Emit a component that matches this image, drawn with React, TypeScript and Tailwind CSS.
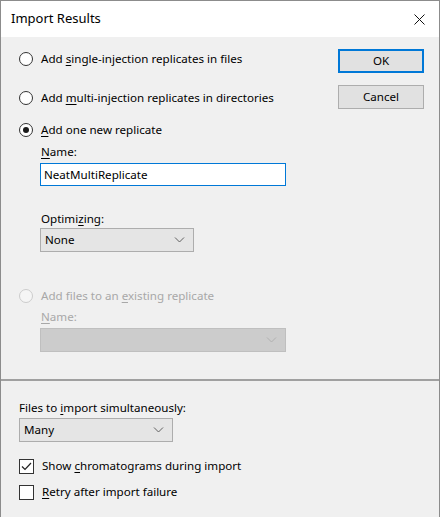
import * as React from "react";

const font = { fontFamily: '"Noto Sans", "Liberation Sans", sans-serif' };

function Key({ children }: { children: React.ReactNode }) {
  return <span className="underline underline-offset-2 decoration-1">{children}</span>;
}

function Radio({ checked, disabled }: { checked?: boolean; disabled?: boolean }) {
  return (
    <span
      className={
        "flex size-[14px] shrink-0 items-center justify-center rounded-full border " +
        (disabled ? "border-[#cccccc] bg-[#f5f5f5]" : "border-[#333333] bg-white")
      }
    >
      {checked && <span className="size-[6px] rounded-full bg-[#1a1a1a]" />}
    </span>
  );
}

function Checkbox({ checked }: { checked?: boolean }) {
  return (
    <span className="flex size-[15px] shrink-0 items-center justify-center border border-[#333333] bg-white">
      {checked && (
        <svg width="11" height="9" viewBox="0 0 11 9" fill="none">
          <path d="M1 4.5 L4 7.5 L10 1" stroke="#222" strokeWidth="1.2" />
        </svg>
      )}
    </span>
  );
}

function Chevron({ color = "#606060" }: { color?: string }) {
  return (
    <svg width="11" height="6" viewBox="0 0 11 6" fill="none">
      <path d="M1 0.5 L5.5 5 L10 0.5" stroke={color} strokeWidth="1" />
    </svg>
  );
}

function Select({ value, width, disabled }: { value?: string; width: string; disabled?: boolean }) {
  return (
    <div
      className={
        "flex h-[24px] items-center justify-between border pl-[4px] pr-[8px] " +
        width +
        (disabled ? " border-[#bfbfbf] bg-[#cccccc]" : " border-[#adadad] bg-[#e5e5e5] text-black")
      }
    >
      <span>{value}</span>
      <Chevron color={disabled ? "#b0b0b0" : "#606060"} />
    </div>
  );
}

function RadioRow({ children, checked, disabled, className = "" }: { children: React.ReactNode; checked?: boolean; disabled?: boolean; className?: string }) {
  return (
    <div className={"flex h-[16px] items-center gap-[8px] " + className + (disabled ? " text-[#a8a8a8]" : " text-black")}>
      <Radio checked={checked} disabled={disabled} />
      <span className="leading-[16px]">{children}</span>
    </div>
  );
}

export default function App() {
  return (
    <div className="flex h-[517px] w-[440px] flex-col border-x border-[#8c8c8c] text-[11.6px] text-black" style={font}>
      <div className="flex h-[37px] shrink-0 items-center justify-between border-t border-[#8c8c8c] bg-white pl-[10px] pr-[14px]">
        <span className="text-[13px]">Import Results</span>
        <svg width="11" height="11" viewBox="0 0 11 11" fill="none">
          <path d="M0.5 0.5 L10.5 10.5 M10.5 0.5 L0.5 10.5" stroke="#111" strokeWidth="1" />
        </svg>
      </div>

      <div className="flex flex-1 flex-col bg-[#f0f0f0]">
        <div className="flex h-[342px] shrink-0 justify-between">
          <div className="flex flex-col pl-[18px]">
            <RadioRow className="mt-[14px]">
              Add <Key>s</Key>ingle-injection replicates in files
            </RadioRow>
            <RadioRow className="mt-[23px]">
              Add <Key>m</Key>ulti-injection replicates in directories
            </RadioRow>
            <RadioRow className="mt-[16px]" checked>
              <Key>A</Key>dd one new replicate
            </RadioRow>
            <div className="ml-[22px] mt-[6px] leading-[16px]">
              <Key>N</Key>ame:
            </div>
            <div className="ml-[21px] mt-[3px] flex h-[23px] w-[246px] items-center border border-[#0078d7] bg-white pl-[3px]">
              NeatMultiReplicate
            </div>
            <div className="ml-[22px] mt-[25px] leading-[16px]">
              Optimi<Key>z</Key>ing:
            </div>
            <div className="ml-[21px] mt-[1px]">
              <Select value="None" width="w-[154px]" />
            </div>
            <RadioRow className="mt-[36px]" disabled>
              Add files to an <Key>e</Key>xisting replicate
            </RadioRow>
            <div className="ml-[22px] mt-[5px] leading-[16px] text-[#a8a8a8]">
              <Key>N</Key>ame:
            </div>
            <div className="ml-[21px] mt-[3px]">
              <Select width="w-[246px]" disabled />
            </div>
          </div>

          <div className="flex flex-col gap-[12px] pr-[15px] pt-[12px]">
            <button className="h-[24px] w-[86px] border-2 border-[#0078d7] bg-[#e1e1e1]">OK</button>
            <button className="h-[24px] w-[86px] border border-[#adadad] bg-[#e1e1e1]">Cancel</button>
          </div>
        </div>

        <div className="h-[2px] shrink-0 bg-[#a0a0a0]" />

        <div className="flex flex-col pl-[18px]">
          <div className="mt-[19px] leading-[16px]">
            Files to <Key>i</Key>mport simultaneously:
          </div>
          <div className="mt-[2px]">
            <Select value="Many" width="w-[154px]" />
          </div>
          <div className="mt-[16px] flex h-[16px] items-center gap-[8px]">
            <Checkbox checked />
            <span>
              Show <Key>c</Key>hromatograms during import
            </span>
          </div>
          <div className="mt-[10px] flex h-[16px] items-center gap-[8px]">
            <Checkbox />
            <span>
              <Key>R</Key>etry after import failure
            </span>
          </div>
        </div>
      </div>
    </div>
  );
}
